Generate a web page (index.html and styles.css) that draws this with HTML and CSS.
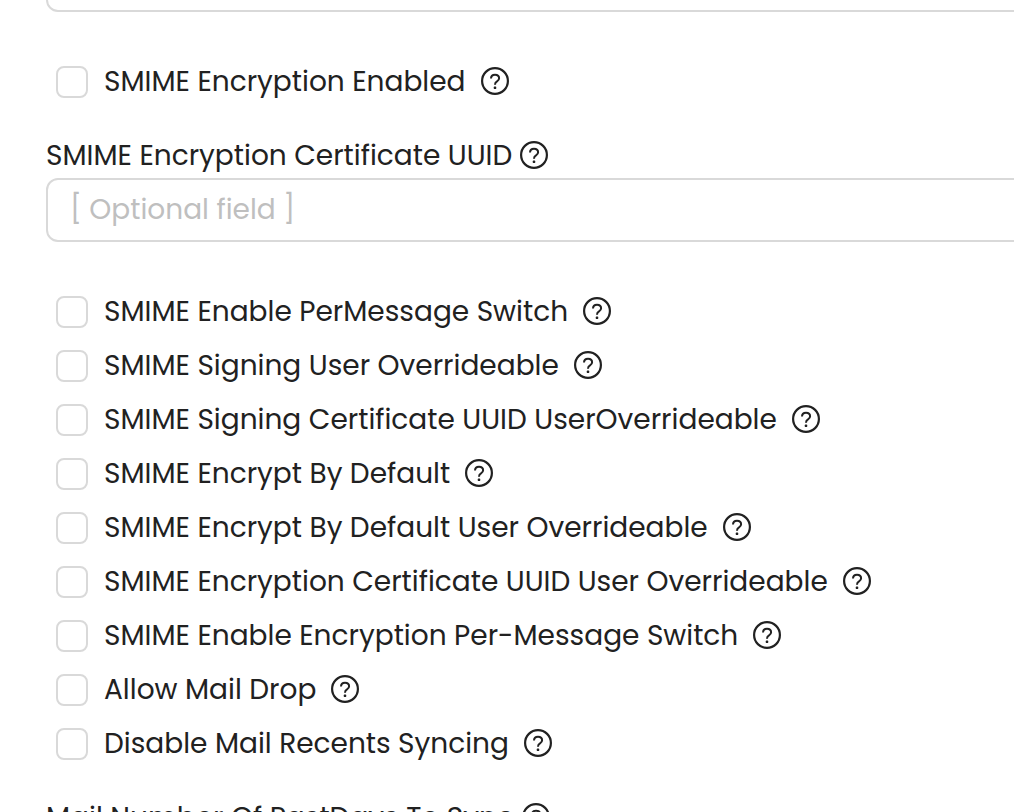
FILE: index.html
```html
<!DOCTYPE html>
<html lang="en">
<head>
<meta charset="utf-8">
<title>Mail settings</title>
<link rel="stylesheet" href="styles.css">
</head>
<body>
<svg class="sprite" aria-hidden="true">
  <symbol id="help" viewBox="0 0 28 28">
    <circle cx="14" cy="14" r="12.9" fill="none" stroke="currentColor" stroke-width="2.2"/>
    <path d="M10 11.6C10 9.2 11.6 7.7 14 7.7s4.1 1.4 4.1 3.5c0 1.6-.9 2.4-2.1 3.2-1.3.8-2 1.5-2 3.3" fill="none" stroke="currentColor" stroke-width="2"/>
    <rect x="12.8" y="19.6" width="2.4" height="2.4" rx=".6" fill="currentColor"/>
  </symbol>
</svg>
<main class="viewport">
<form class="settings">
  <input class="field" type="text" aria-label="Certificate UUID">

  <div class="options">
    <div class="option"><input class="check" type="checkbox" id="c0"><label for="c0">SMIME Encryption Enabled</label><svg class="help"><use href="#help"/></svg></div>
  </div>

  <div class="group">
    <div class="caption"><label for="uuid">SMIME Encryption Certificate UUID</label><svg class="help"><use href="#help"/></svg></div>
    <input class="field" id="uuid" type="text" placeholder="[ Optional field ]">
  </div>

  <div class="options">
    <div class="option"><input class="check" type="checkbox" id="c1"><label for="c1">SMIME Enable PerMessage Switch</label><svg class="help"><use href="#help"/></svg></div>
    <div class="option"><input class="check" type="checkbox" id="c2"><label for="c2">SMIME Signing User Overrideable</label><svg class="help"><use href="#help"/></svg></div>
    <div class="option"><input class="check" type="checkbox" id="c3"><label for="c3">SMIME Signing Certificate UUID UserOverrideable</label><svg class="help"><use href="#help"/></svg></div>
    <div class="option"><input class="check" type="checkbox" id="c4"><label for="c4">SMIME Encrypt By Default</label><svg class="help"><use href="#help"/></svg></div>
    <div class="option"><input class="check" type="checkbox" id="c5"><label for="c5">SMIME Encrypt By Default User Overrideable</label><svg class="help"><use href="#help"/></svg></div>
    <div class="option"><input class="check" type="checkbox" id="c6"><label for="c6">SMIME Encryption Certificate UUID User Overrideable</label><svg class="help"><use href="#help"/></svg></div>
    <div class="option"><input class="check" type="checkbox" id="c7"><label for="c7">SMIME Enable Encryption Per-Message Switch</label><svg class="help"><use href="#help"/></svg></div>
    <div class="option"><input class="check" type="checkbox" id="c8"><label for="c8">Allow Mail Drop</label><svg class="help"><use href="#help"/></svg></div>
    <div class="option"><input class="check" type="checkbox" id="c9"><label for="c9">Disable Mail Recents Syncing</label><svg class="help"><use href="#help"/></svg></div>
  </div>

  <div class="group">
    <div class="caption"><label for="days">Mail Number Of PastDays To Sync</label><svg class="help"><use href="#help"/></svg></div>
    <input class="field" id="days" type="text">
  </div>
</form>
</main>
</body>
</html>
```
FILE: styles.css
```css
* { box-sizing: border-box; }
body {
  margin: 0;
  background: #fff;
  color: #212121;
  font: 28px/44px Poppins, Inter, sans-serif;
}
.sprite { position: absolute; width: 0; height: 0; }
.viewport { height: 100vh; overflow: hidden; }
.settings {
  display: flex;
  flex-direction: column;
  margin-top: -52px;
  margin-right: -24px;
  padding-left: 46px;
}
.field {
  display: block;
  width: 100%;
  height: 64px;
  padding: 0 22px;
  border: 2px solid #d9d9d9;
  border-radius: 12px;
  background: #fff;
  color: inherit;
  font: inherit;
}
.field::placeholder { color: #bfbfbf; opacity: 1; }
.options { padding: 43px 0 25px 10px; }
.option { display: flex; align-items: center; height: 54px; }
.check {
  appearance: none;
  flex: none;
  width: 32px;
  height: 32px;
  margin: 0 16px 0 0;
  border: 2px solid #d9d9d9;
  border-radius: 8px;
  background: #fff;
}
.help { flex: none; width: 28px; height: 28px; margin-bottom: 2px; }
.option .help { margin-left: 15px; }
.caption { display: flex; align-items: center; gap: 8px; }
.option label, .caption { white-space: nowrap; }
```
